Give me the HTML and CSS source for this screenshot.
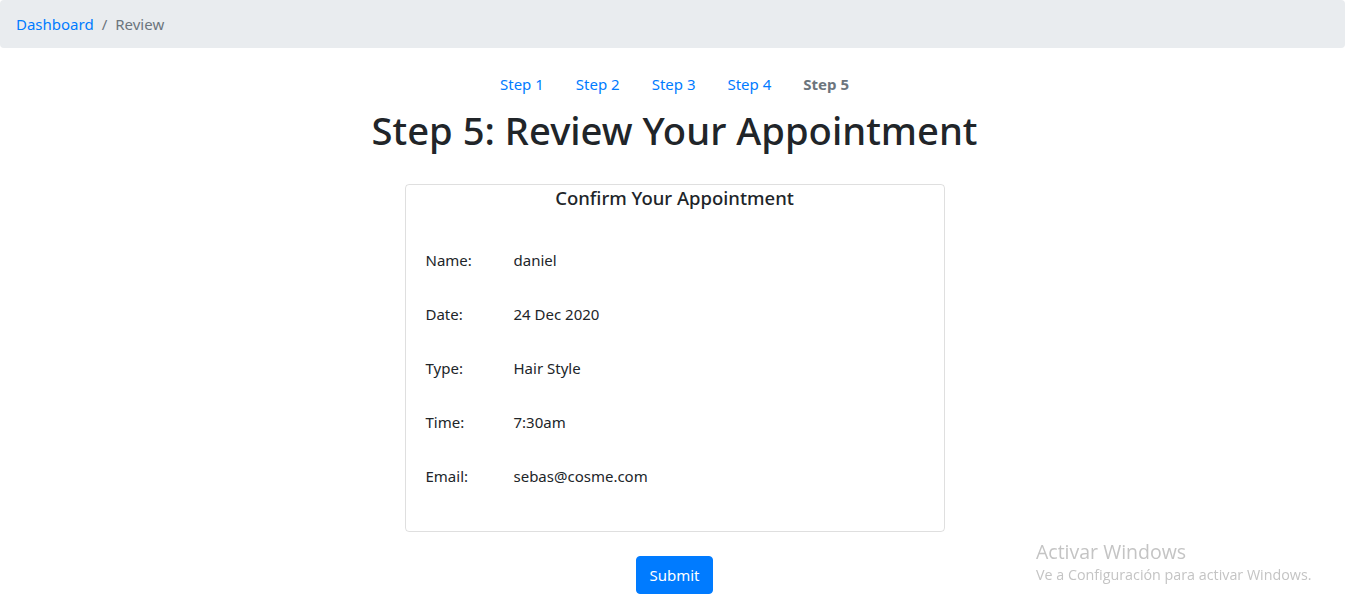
FILE: index.html
```html
<!DOCTYPE html>
<html lang="es">
<head>
<meta charset="utf-8">
<title>Review</title>
<link rel="stylesheet" href="styles.css">
</head>
<body>
<nav class="breadcrumb">
  <a class="crumb-link" href="#">Dashboard</a>
  <span class="crumb-sep">/</span>
  <span class="crumb-active">Review</span>
</nav>
<main class="content">
  <ul class="steps">
    <li><a class="step-link" href="#">Step 1</a></li>
    <li><a class="step-link" href="#">Step 2</a></li>
    <li><a class="step-link" href="#">Step 3</a></li>
    <li><a class="step-link" href="#">Step 4</a></li>
    <li><span class="step-link step-active">Step 5</span></li>
  </ul>
  <h1 class="page-title">Step 5: Review Your Appointment</h1>
  <div class="card">
    <h5 class="card-title">Confirm Your Appointment</h5>
    <div class="details">
      <div class="row"><span class="label">Name:</span><span class="value">daniel</span></div>
      <div class="row"><span class="label">Date:</span><span class="value">24 Dec 2020</span></div>
      <div class="row"><span class="label">Type:</span><span class="value">Hair Style</span></div>
      <div class="row"><span class="label">Time:</span><span class="value">7:30am</span></div>
      <div class="row"><span class="label">Email:</span><span class="value">sebas@cosme.com</span></div>
    </div>
  </div>
  <div class="actions">
    <button class="btn-primary" type="button">Submit</button>
  </div>
</main>
<div class="watermark">
  <div class="wm-title">Activar Windows</div>
  <div class="wm-sub">Ve a Configuración para activar Windows.</div>
</div>
</body>
</html>
```
FILE: styles.css
```css
* { box-sizing: border-box; }
html, body { margin: 0; padding: 0; }
body {
  font-family: "Noto Sans", "Open Sans", "Liberation Sans", sans-serif;
  font-size: 15px;
  line-height: 1.5;
  color: #212529;
  background: #fff;
}
.breadcrumb {
  display: flex;
  align-items: center;
  height: 48px;
  padding: 0 16px;
  background: #e9ecef;
  border-radius: 4px;
  margin-bottom: 16px;
  font-size: 15px;
}
.crumb-link { color: #007bff; text-decoration: none; }
.crumb-sep { color: #6c757d; padding: 0 8px; }
.crumb-active { color: #6c757d; }
.content { padding-left: 4px; }
.steps {
  list-style: none;
  margin: 0;
  padding: 0;
  display: flex;
  justify-content: center;
  height: 40px;
  align-items: center;
}
.step-link {
  display: block;
  padding: 8px 16px;
  color: #007bff;
  text-decoration: none;
  font-size: 15px;
}
.step-active { color: #6c757d; font-weight: 700; }
.page-title {
  margin: 2px 0 30px;
  text-align: center;
  font-size: 38.2px;
  font-weight: 500;
  line-height: 48px;
}
.card {
  width: 540px;
  margin: 0 auto;
  border: 1px solid rgba(0,0,0,.125);
  border-radius: 4px;
  padding: 1px 20px 28px;
}
.card-title {
  margin: 0;
  text-align: center;
  font-size: 18.5px;
  font-weight: 500;
  line-height: 24px;
  margin-bottom: 23px;
}
.row {
  display: flex;
  align-items: center;
  height: 54px;
  font-size: 15px;
}
.label { width: 88px; }
.actions {
  display: flex;
  justify-content: center;
  margin-top: 24px;
}
.btn-primary {
  font-family: inherit;
  font-size: 15px;
  line-height: 24px;
  color: #fff;
  background: #007bff;
  border: 1px solid #007bff;
  border-radius: 4px;
  padding: 6px 12px;
  height: 38px;
  width: 77px;
}
.watermark {
  position: fixed;
  left: 1036px;
  top: 540px;
  color: #c4c4c4;
  font-family: "Open Sans", "Noto Sans", sans-serif;
  line-height: 1.2;
}
.wm-title { font-size: 19.5px; }
.wm-sub { font-size: 14.3px; margin-top: 3px; }
```
